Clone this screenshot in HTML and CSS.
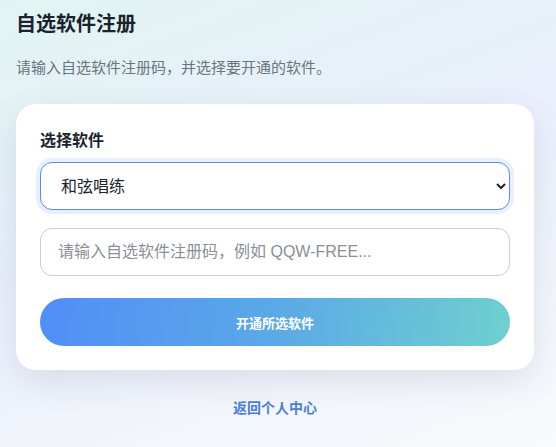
FILE: index.html
```html
<!DOCTYPE html>
<html lang="zh-CN">
<head>
<meta charset="utf-8">
<title>自选软件注册</title>
<link rel="stylesheet" href="styles.css">
</head>
<body>
<main class="page">
  <h1 class="title">自选软件注册</h1>
  <p class="subtitle">请输入自选软件注册码，并选择要开通的软件。</p>
  <section class="card">
    <label class="label" for="soft">选择软件</label>
    <select id="soft" class="field select">
      <option>和弦唱练</option>
    </select>
    <input class="field input" type="text" placeholder="请输入自选软件注册码，例如 QQW-FREE...">
    <button class="btn" type="button">开通所选软件</button>
  </section>
  <a class="back" href="#">返回个人中心</a>
</main>
</body>
</html>
```
FILE: styles.css
```css
html, body {
  margin: 0;
  padding: 0;
  height: 100%;
}
body {
  font-family: "Liberation Sans", "Noto Sans CJK SC", sans-serif;
  background: linear-gradient(160deg, #e1f4f2 0%, #e9effb 45%, #f2f5fb 75%, #f8fafc 100%);
  color: #1f2530;
}
.page {
  padding: 12px 22px 0 16px;
  display: flex;
  flex-direction: column;
}
.title {
  margin: 0 0 22px;
  font-size: 20px;
  line-height: 24px;
  font-weight: 700;
  color: #1b222d;
}
.subtitle {
  margin: 0 0 26px;
  font-size: 15px;
  line-height: 20px;
  color: #6b7380;
}
.card {
  background: #fff;
  border-radius: 20px;
  padding: 26px 24px 24px;
  display: flex;
  flex-direction: column;
  box-shadow: 0 12px 32px rgba(50, 70, 120, 0.12);
}
.label {
  font-size: 16px;
  line-height: 22px;
  font-weight: 700;
  color: #1d2430;
  margin-bottom: 10px;
}
.field {
  box-sizing: border-box;
  height: 48px;
  width: 100%;
  border-radius: 12px;
  font-family: inherit;
  font-size: 16px;
  background: #fff;
}
.select {
  border: 1px solid #5a8ce0;
  box-shadow: 0 0 0 4px rgba(80, 140, 245, 0.13);
  padding: 0 10px 0 16px;
  color: #1d2430;
  outline: none;
}
.input {
  margin-top: 18px;
  border: 1px solid #c9ced6;
  padding: 0 17px;
  color: #1d2430;
  outline: none;
}
.input::placeholder {
  color: #8a8f98;
}
.btn {
  margin-top: 22px;
  height: 48px;
  border: none;
  border-radius: 24px;
  background: linear-gradient(100deg, #508ef8 0%, #5ba9e6 50%, #6fd0cf 100%);
  color: #fff;
  font-family: inherit;
  font-size: 13px;
  font-weight: 700;
  cursor: pointer;
}
.back {
  margin-top: 28px;
  align-self: center;
  font-size: 14px;
  line-height: 20px;
  font-weight: 700;
  color: #4a7fd8;
  text-decoration: none;
}
```
